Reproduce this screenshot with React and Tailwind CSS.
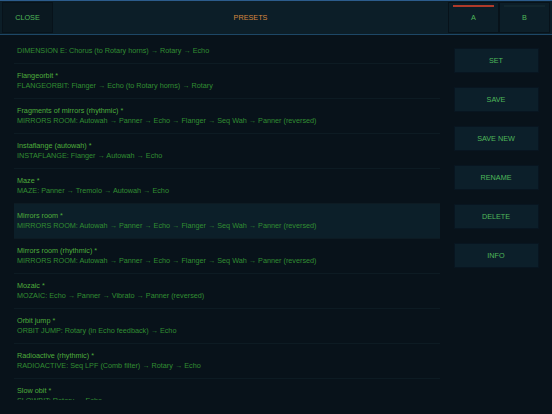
import React from 'react';

const presets = [
  { title: 'Flangeorbit *', sub: 'FLANGEORBIT: Flanger → Echo (to Rotary horns) → Rotary' },
  { title: 'Fragments of mirrors (rhythmic) *', sub: 'MIRRORS ROOM: Autowah → Panner → Echo → Flanger → Seq Wah → Panner (reversed)' },
  { title: 'Instaflange (autowah) *', sub: 'INSTAFLANGE: Flanger → Autowah → Echo' },
  { title: 'Maze *', sub: 'MAZE: Panner → Tremolo → Autowah → Echo' },
  { title: 'Mirrors room *', sub: 'MIRRORS ROOM: Autowah → Panner → Echo → Flanger → Seq Wah → Panner (reversed)', active: true },
  { title: 'Mirrors room (rhythmic) *', sub: 'MIRRORS ROOM: Autowah → Panner → Echo → Flanger → Seq Wah → Panner (reversed)' },
  { title: 'Mozaic *', sub: 'MOZAIC: Echo → Panner → Vibrato → Panner (reversed)' },
  { title: 'Orbit jump *', sub: 'ORBIT JUMP: Rotary (in Echo feedback) → Echo' },
  { title: 'Radioactive (rhythmic) *', sub: 'RADIOACTIVE: Seq LPF (Comb filter) → Rotary → Echo' },
  { title: 'Slow obit *', sub: 'SLOWBIT: Rotary → Echo' },
];

const actions = ['SET', 'SAVE', 'SAVE NEW', 'RENAME', 'DELETE', 'INFO'];

function PresetRow({ title, sub, active }) {
  return (
    <div
      className={`h-[35px] flex flex-col justify-center pl-[3px] border-b border-[#0d1b23] ${
        active ? 'bg-[#0c1f29]' : ''
      }`}
    >
      <div className="text-[7.25px] leading-[10px] text-[#4eae3c]">{title}</div>
      <div className="text-[7.25px] leading-[10px] text-[#318e32] whitespace-nowrap">{sub}</div>
    </div>
  );
}

export default function App() {
  return (
    <div
      className="w-[552px] h-[414px] bg-[#08121a] overflow-hidden flex flex-col"
      style={{ fontFamily: '"Liberation Sans", Arial, sans-serif' }}
    >
      {/* header */}
      <div className="h-[35px] shrink-0 bg-[#0c1e28] border-t border-[#2c5c8c] border-b border-b-[#1d4766] flex items-stretch px-[2px] pt-[1px] pb-[1px]">
        <button className="w-[51px] pt-[2px] bg-[#0a1820] border border-[#07121a] text-[#4fb85a] text-[7.25px] flex items-center justify-center">
          CLOSE
        </button>
        <div className="flex-1 pt-[2px] flex items-center justify-center text-[#d8883f] text-[7.25px]">
          PRESETS
        </div>
        <div className="w-[51px] pt-[2px] border border-[#07121a] relative flex items-center justify-center text-[#4fb85a] text-[7.25px]">
          <span className="absolute top-[2px] left-[4px] right-[4px] h-[2px] bg-[#b03a2a]" />
          A
        </div>
        <div className="w-[51px] pt-[2px] border border-[#07121a] relative flex items-center justify-center text-[#4fb85a] text-[7.25px]">
          <span className="absolute top-[2px] left-[4px] right-[4px] h-[2px] bg-[#12262e]" />
          B
        </div>
      </div>

      <div className="flex flex-1 min-h-0">
        {/* list */}
        <div className="ml-[14px] w-[426px] mt-[1px] h-[364px] overflow-hidden">
          <div className="h-[28px] flex flex-col justify-end pb-[7px] pl-[3px] border-b border-[#0d1b23]">
            <div className="text-[7.25px] leading-[10px] text-[#318e32] whitespace-nowrap">
              DIMENSION E: Chorus (to Rotary horns) → Rotary → Echo
            </div>
          </div>
          {presets.map((p, i) => (
            <PresetRow key={i} {...p} />
          ))}
        </div>

        {/* actions */}
        <div className="flex-1 flex flex-col items-center pt-[13px] gap-[14px]">
          {actions.map((a) => (
            <button
              key={a}
              className="w-[85px] h-[25px] pt-[1px] bg-[#0c1f2a] border border-[#081520] text-[#4fb85a] text-[7.25px] flex items-center justify-center"
            >
              {a}
            </button>
          ))}
        </div>
      </div>
    </div>
  );
}
